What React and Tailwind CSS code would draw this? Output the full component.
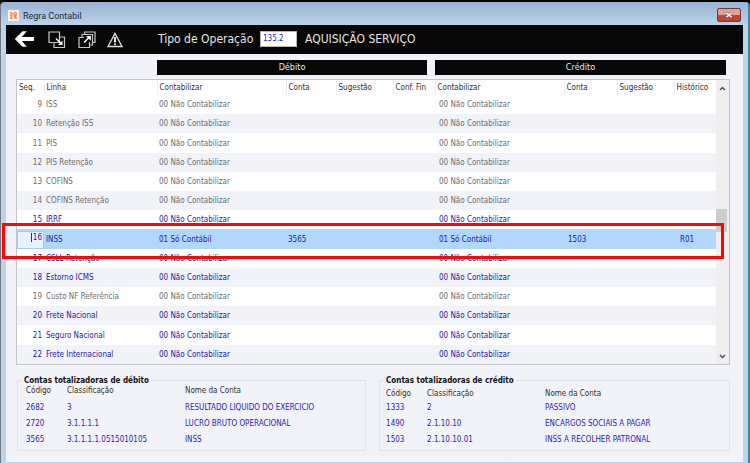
import React, { useState } from "react";

const rows = [
  { seq: 9, linha: "ISS", muted: true },
  { seq: 10, linha: "Retenção ISS", muted: true },
  { seq: 11, linha: "PIS", muted: true },
  { seq: 12, linha: "PIS Retenção", muted: true },
  { seq: 13, linha: "COFINS", muted: true },
  { seq: 14, linha: "COFINS Retenção", muted: true },
  { seq: 15, linha: "IRRF" },
  { seq: 16, linha: "INSS", debito: "3565", credito: "1503", historico: "R01", selected: true },
  { seq: 17, linha: "CSLL Retenção" },
  { seq: 18, linha: "Estorno ICMS" },
  { seq: 19, linha: "Custo NF Referência", muted: true },
  { seq: 20, linha: "Frete Nacional" },
  { seq: 21, linha: "Seguro Nacional" },
  { seq: 22, linha: "Frete Internacional" },
];

const debitos = [
  ["2682", "3", "RESULTADO LIQUIDO DO EXERCICIO"],
  ["2720", "3.1.1.1.1", "LUCRO BRUTO OPERACIONAL"],
  ["3565", "3.1.1.1.1.0515010105", "INSS"],
];

const creditos = [
  ["1333", "2", "PASSIVO"],
  ["1490", "2.1.10.10", "ENCARGOS SOCIAIS A PAGAR"],
  ["1503", "2.1.10.10.01", "INSS A RECOLHER PATRONAL"],
];

const TitleBar = () => (
  <div className="flex h-[23px] items-center justify-between px-[2px]">
    <div className="flex items-center gap-[4px] pt-[4px]">
      <svg className="h-[11px] w-[11px]" viewBox="0 0 11 11">
        <rect width="11" height="11" fill="#fdf6f0" />
        <path d="M2 2l3 2M6 2l3 1M2 5l3 1M6 5l3-1M2 8l3 1M6 7l3 2M3 2v7M5 3l3 5M8 2v7" stroke="#f0864a" strokeWidth="1.1" fill="none" />
      </svg>
      <h1 className="font-[Roboto,sans-serif] text-[9px] leading-[12px] text-[#1d2935]">Regra Contabil</h1>
    </div>
    <button
      aria-label="Fechar"
      className="mt-[3px] flex h-[14px] w-[24px] items-center justify-center rounded-[2px] border border-[#6b3a3f] bg-linear-to-b from-[#e0a294] from-45% to-[#bd4530] to-55%"
    >
      <svg className="h-[6px] w-[8px]" viewBox="0 0 8 6">
        <path d="M1.5 .8l5 4.400M6.500 .8l-5 4.400" stroke="#5d4048" strokeWidth="2.6" />
        <path d="M1.5 .8l5 4.400M6.500 .8l-5 4.400" stroke="#fff" strokeWidth="1.6" />
      </svg>
    </button>
  </div>
);

const Toolbar = () => {
  const [tipo, setTipo] = useState("135.2");

  return (
    <div className="flex h-[29px] items-center bg-[#080808] pb-[2px] pl-[8px]">
      <div className="flex w-[144px] items-center">
        <button aria-label="Voltar" className="w-[34px]">
          <svg className="block h-[18px] w-[21px]" viewBox="0 0 21 18">
            <path d="M8.500 1.200h4.300L7.800 7H20v4H7.800l5 5.800H8.500L.8 9z" fill="#fff" />
          </svg>
        </button>
        <button aria-label="Copiar" className="w-[30px] pt-[3px]">
          <svg className="block h-[18px] w-[18px]" viewBox="0 0 18 18" fill="none" stroke="#c8c8c8" strokeWidth="1.2">
            <path d="M5 11.500H1V1h10.500v5" />
            <path d="M11.500 6h5v10.500H6v-5h5.500z" />
            <path d="M8 7.500l5.500 5.500" stroke="#fff" strokeWidth="1.500" />
            <path d="M14.500 9.500v4.500H10z" fill="#fff" stroke="none" />
          </svg>
        </button>
        <button aria-label="Abrir" className="w-[29px] pt-[3px]">
          <svg className="block h-[18px] w-[18px]" viewBox="0 0 18 18" fill="none" stroke="#c8c8c8" strokeWidth="1.2">
            <path d="M4 6V3.500h10.500V14H12" />
            <path d="M6.500 3.500V1H17v10.500h-2.500" />
            <path d="M6 6.500H1v10h10.500V11" />
            <path d="M6 11.500l5-5" stroke="#fff" strokeWidth="1.500" />
            <path d="M8 5h4.800v4.800z" fill="#fff" stroke="none" />
          </svg>
        </button>
        <button aria-label="Avisos" className="pt-[3px]">
          <svg className="block h-[16px] w-[16px]" viewBox="0 0 16 16" fill="none" stroke="#dedede" strokeWidth="1.400">
            <path d="M8 1.500L15 14.500H1z" />
            <path d="M8 5v5.500M8 11.500v1.500" stroke="#fff" strokeWidth="1.800" />
          </svg>
        </button>
      </div>
      <label htmlFor="tipo" className="w-[102px] whitespace-nowrap text-[12px] leading-[16px] text-[#e4e4e4]">
        Tipo de Operação
      </label>
      <input
        id="tipo"
        value={tipo}
        onChange={(e) => setTipo(e.target.value)}
        className="h-[16px] w-[37px] border border-[#b5b5b5] bg-white pl-[2px] text-[8px] text-[#2a1fb5]"
      />
      <span className="pl-[8px] text-[12px] leading-[16px] text-[#e4e4e4]">AQUISIÇÃO SERVIÇO</span>
    </div>
  );
};

const head = "h-[15px] border-r border-[#ececec] p-0 pl-[2px] text-left font-normal";

const RulesTable = () => (
  <table className="h-[284px] w-full table-fixed border-collapse whitespace-nowrap text-[8px] leading-[12px]">
    <colgroup>
      <col className="w-[27px]" />
      <col className="w-[113px]" />
      <col className="w-[129px]" />
      <col className="w-[50px]" />
      <col className="w-[57px]" />
      <col className="w-[42px]" />
      <col className="w-[129px]" />
      <col className="w-[53px]" />
      <col className="w-[57px]" />
      <col className="w-[42px]" />
    </colgroup>
    <thead className="text-[#303030]">
      <tr>
        <th className={head}>Seq.</th>
        <th className={head}>Linha</th>
        <th className={head}>Contabilizar</th>
        <th className={head}>Conta</th>
        <th className={head}>Sugestão</th>
        <th className={head}>Conf. Fin</th>
        <th className={head}>Contabilizar</th>
        <th className={head}>Conta</th>
        <th className={head}>Sugestão</th>
        <th className={head}>Histórico</th>
      </tr>
    </thead>
    <tbody className="[&_td]:p-0 [&_td]:pt-px">
      {rows.map((row) => {
        const regra = row.selected ? "01 Só Contábil" : "00 Não Contabilizar";
        return (
          <tr
            key={row.seq}
            className={`h-[19px] ${row.selected ? "bg-[#b2d7ff]" : "odd:bg-white even:bg-[#f2f3f9]"} ${
              row.muted ? "text-[#6c6c6c]" : "text-[#1c16a8]"
            }`}
          >
            <td className="text-right">
              {row.selected ? (
                <div className="relative">
                  <input
                    aria-label="Seq."
                    defaultValue={row.seq}
                    className="block h-[18px] w-full border border-[#a3cdf8] bg-[#e6f2ff] pb-[5px] pr-[1px] text-right"
                  />
                  <span className="absolute right-[12px] top-[2px] h-[9px] w-px bg-[#333]" />
                </div>
              ) : (
                <span className="pr-[2px]">{row.seq}</span>
              )}
            </td>
            <td>
              <span className="pl-[2px]">{row.linha}</span>
            </td>
            <td>
              <span className="pl-[2px]">{regra}</span>
            </td>
            <td>
              <span className="pl-[2px]">{row.debito}</span>
            </td>
            <td />
            <td />
            <td>
              <span className="pl-[4px]">{regra}</span>
            </td>
            <td>
              <span className="pl-[4px]">{row.credito}</span>
            </td>
            <td />
            <td>
              <span className="pl-[6px]">{row.historico}</span>
            </td>
          </tr>
        );
      })}
    </tbody>
  </table>
);

const ScrollBar = () => (
  <div className="flex w-[13px] shrink-0 flex-col bg-[#efefef]">
    <button aria-label="Subir" className="flex h-[16px] items-center justify-center">
      <svg className="h-[5px] w-[7px]" viewBox="0 0 7 5">
        <path d="M1 4l2.500-2.500L6 4" fill="none" stroke="#505050" strokeWidth="1.500" />
      </svg>
    </button>
    <div className="flex-1 pt-[113px]">
      <div className="h-[23px] w-[11px] bg-[#cdcdcd]" />
    </div>
    <button aria-label="Descer" className="flex h-[16px] items-center justify-center">
      <svg className="h-[5px] w-[7px]" viewBox="0 0 7 5">
        <path d="M1 1l2.500 2.500L6 1" fill="none" stroke="#505050" strokeWidth="1.500" />
      </svg>
    </button>
  </div>
);

const Totals = ({ title, items, className, titleClass, headClass }) => (
  <section className={`h-[71px] min-w-0 border border-[#e2e3e8] ${className}`}>
    <h2 className={`-mt-[6px] w-fit bg-[#f2f3f9] px-[2px] text-[8px] font-bold leading-[12px] text-[#101010] ${titleClass}`}>
      {title}
    </h2>
    <table className="w-full table-fixed whitespace-nowrap text-left text-[8px] leading-[12px]">
      <colgroup>
        <col className="w-[41px]" />
        <col className="w-[118px]" />
        <col />
      </colgroup>
      <thead className={`text-[#303030] ${headClass}`}>
        <tr className="h-[13px]">
          <th className="p-0 font-normal">Código</th>
          <th className="p-0 font-normal">Classificação</th>
          <th className="p-0 font-normal">Nome da Conta</th>
        </tr>
      </thead>
      <tbody className="text-[#2a22b8]">
        {items.map((item) => (
          <tr key={item[0]}>
            {item.map((value) => (
              <td key={value} className="h-[16px] p-0">{value}</td>
            ))}
          </tr>
        ))}
      </tbody>
    </table>
  </section>
);

const App = () => (
  <div className="bg-black pt-[2px] font-['DejaVu_Sans_Condensed','DejaVu_Sans',sans-serif]">
    <div className="rounded-t-[4px] border-l border-r-2 border-l-[#6f7880] border-r-[#3d8a9c] bg-linear-to-b from-[#98b4d2] to-[#bdd4ec] to-[24px] px-[5px] pb-[2px]">
      <TitleBar />
      <Toolbar />
      <main className="bg-[#f2f3f9] pb-[11px] pl-[10px] pr-[13px] pt-[6px]">
        <div className="mb-[4px] grid grid-cols-[141fr_270fr_8fr_291fr_4fr] text-center text-[9px] leading-[15px] text-[#e8e8e8]">
          <h2 className="col-start-2 bg-[#080808]">Débito</h2>
          <h2 className="col-start-4 bg-[#080808]">Crédito</h2>
        </div>
        <div className="relative flex border border-[#c3c4c8] bg-white">
          <div className="min-w-0 flex-1">
            <RulesTable />
          </div>
          <ScrollBar />
          <div className="pointer-events-none absolute -left-[15px] right-[5px] top-[143px] h-[36px] border-[3px] border-[#fb0505]" />
        </div>
        <div className="mt-[15px] flex gap-[13px] pl-px">
          <Totals
            title="Contas totalizadoras de débito"
            items={debitos}
            className="flex-[348] pl-[8px]"
            titleClass="-ml-[4px]"
            headClass="align-top leading-[8px]"
          />
          <Totals
            title="Contas totalizadoras de crédito"
            items={creditos}
            className="flex-[352] pl-[6px]"
            titleClass="-ml-[2px]"
          />
        </div>
      </main>
    </div>
  </div>
);

export default App;
